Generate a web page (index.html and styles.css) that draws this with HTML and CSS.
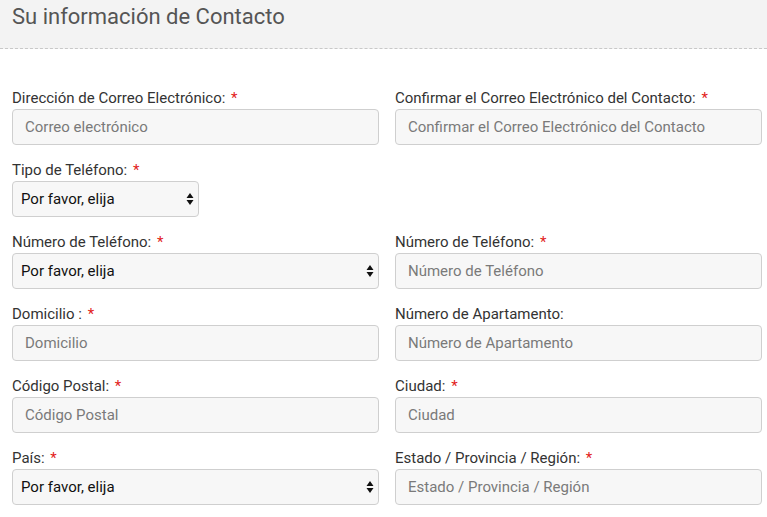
FILE: index.html
```html
<!DOCTYPE html>
<html lang="es">
<head>
  <meta charset="UTF-8" />
  <meta name="viewport" content="width=device-width, initial-scale=1.0" />
  <title>Su información de Contacto</title>
  <link rel="stylesheet" href="styles.css">
</head>
<body>
  <header class="section-head">
    <h2>Su información de Contacto</h2>
  </header>

  <main class="contact-form">
    <div class="field">
      <label for="email">Dirección de Correo Electrónico: <span class="req">*</span></label>
      <input id="email" placeholder="Correo electrónico">
    </div>
    <div class="field">
      <label for="emailConfirm">Confirmar el Correo Electrónico del Contacto: <span class="req">*</span></label>
      <input id="emailConfirm" placeholder="Confirmar el Correo Electrónico del Contacto">
    </div>

    <div class="field">
      <label for="phoneType">Tipo de Teléfono: <span class="req">*</span></label>
      <div class="select-wrap small">
        <select id="phoneType"><option>Por favor, elija</option></select>
        <svg class="arrows" width="8" height="14" viewBox="0 0 8 14"><path d="M4 1 L7.5 6 H0.5 Z M4 13 L7.5 8 H0.5 Z" fill="#111"/></svg>
      </div>
    </div>
    <div class="field empty"></div>

    <div class="field">
      <label for="phoneCode">Número de Teléfono: <span class="req">*</span></label>
      <div class="select-wrap">
        <select id="phoneCode"><option>Por favor, elija</option></select>
        <svg class="arrows" width="8" height="14" viewBox="0 0 8 14"><path d="M4 1 L7.5 6 H0.5 Z M4 13 L7.5 8 H0.5 Z" fill="#111"/></svg>
      </div>
    </div>
    <div class="field">
      <label for="phone">Número de Teléfono: <span class="req">*</span></label>
      <input id="phone" placeholder="Número de Teléfono">
    </div>

    <div class="field">
      <label for="street">Domicilio : <span class="req">*</span></label>
      <input id="street" placeholder="Domicilio">
    </div>
    <div class="field">
      <label for="apt">Número de Apartamento:</label>
      <input id="apt" placeholder="Número de Apartamento">
    </div>

    <div class="field">
      <label for="zip">Código Postal: <span class="req">*</span></label>
      <input id="zip" placeholder="Código Postal">
    </div>
    <div class="field">
      <label for="city">Ciudad: <span class="req">*</span></label>
      <input id="city" placeholder="Ciudad">
    </div>

    <div class="field">
      <label for="country">País: <span class="req">*</span></label>
      <div class="select-wrap">
        <select id="country"><option>Por favor, elija</option></select>
        <svg class="arrows" width="8" height="14" viewBox="0 0 8 14"><path d="M4 1 L7.5 6 H0.5 Z M4 13 L7.5 8 H0.5 Z" fill="#111"/></svg>
      </div>
    </div>
    <div class="field">
      <label for="region">Estado / Provincia / Región: <span class="req">*</span></label>
      <input id="region" placeholder="Estado / Provincia / Región">
    </div>
  </main>
</body>
</html>
```

FILE: styles.css
```css
* {
  margin: 0;
  padding: 0;
  box-sizing: border-box;
}
body {
  font-family: Roboto, "Liberation Sans", sans-serif;
  background: #ffffff;
  color: #333;
}
.section-head {
  height: 49px;
  background: #f3f3f3;
  border-bottom: 1px dashed #c8c8c8;
  padding: 3px 12px 0;
}
.section-head h2 {
  font-size: 22px;
  font-weight: 400;
  line-height: 28px;
  color: #555;
}
.contact-form {
  display: grid;
  grid-template-columns: 1fr 1fr;
  column-gap: 16px;
  row-gap: 15px;
  padding: 39px 5px 0 12px;
}
.field label {
  display: block;
  font-size: 15px;
  line-height: 20px;
  margin-bottom: 1px;
  color: #333;
}
.req {
  color: #e21b1b;
  margin-left: 2px;
}
input, select {
  display: block;
  width: 100%;
  height: 36px;
  border: 1px solid #cfcfcf;
  border-radius: 4px;
  background: #f7f7f7;
  font-family: inherit;
  font-size: 15px;
  color: #333;
}
input {
  padding: 0 12px;
}
input::placeholder {
  color: #7a7a7a;
}
select {
  appearance: none;
  -webkit-appearance: none;
  padding: 0 24px 0 8px;
  color: #111;
}
.select-wrap {
  position: relative;
}
.select-wrap.small {
  width: 187px;
}
.select-wrap .arrows {
  position: absolute;
  right: 5px;
  top: 11px;
  pointer-events: none;
}
```
